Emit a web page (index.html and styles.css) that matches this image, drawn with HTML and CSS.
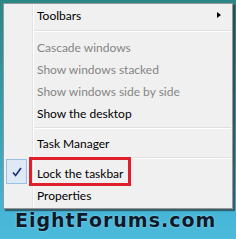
FILE: index.html
```html
<!DOCTYPE html>
<html>
<head>
<meta charset="utf-8">
<link rel="stylesheet" href="styles.css">
</head>
<body>
<div class="menu">
  <div class="item"><span class="label">Toolbars</span><span class="arrow"></span></div>
  <div class="sep first"></div>
  <div class="item disabled"><span class="label">Cascade windows</span></div>
  <div class="item disabled"><span class="label">Show windows stacked</span></div>
  <div class="item disabled"><span class="label">Show windows side by side</span></div>
  <div class="item"><span class="label">Show the desktop</span></div>
  <div class="sep"></div>
  <div class="item"><span class="label">Task Manager</span></div>
  <div class="sep"></div>
  <div class="item checked">
    <span class="check"><svg width="12" height="12" viewBox="0 0 12 12"><path d="M2 6.5 L4.6 9.5 L10 2" fill="none" stroke="#1c2d74" stroke-width="1.6"/></svg></span>
    <span class="label">Lock the taskbar</span>
    <span class="highlight"></span>
  </div>
  <div class="item"><span class="label">Properties</span></div>
</div>
<div class="brand">EightForums.com</div>
</body>
</html>
```
FILE: styles.css
```css
html, body {
  margin: 0;
  padding: 0;
}
body {
  width: 236px;
  height: 239px;
  overflow: hidden;
  background: linear-gradient(to bottom, #2b8686 0%, #35a0b0 50%, #44b4d6 85%, #4bbadb 100%);
  font-family: "Lato", "Open Sans", sans-serif;
  font-size: 12px;
  color: #000;
  padding-top: 3px;
  box-sizing: border-box;
}
.menu {
  position: relative;
  margin-left: 3px;
  width: 228px;
  background: #f0f0f0;
  border: 1px solid #979797;
  box-shadow: 2px 2px 1px rgba(40,40,40,0.6);
  padding: 0 0 2px 0;
  background-image: linear-gradient(to right, transparent 28px, #e2e3e3 28px, #e2e3e3 29px, #ffffff 29px, #ffffff 30px, transparent 30px);
}
.item {
  position: relative;
  height: 22px;
  display: flex;
  align-items: center;
  padding-left: 33px;
}
.item.disabled {
  color: #858585;
}
.arrow {
  position: absolute;
  right: 11px;
  top: 8px;
  width: 0;
  height: 0;
  border-top: 3.5px solid transparent;
  border-bottom: 3.5px solid transparent;
  border-left: 4px solid #000;
}
.sep {
  height: 0;
  margin: 3px 1px 3px 30px;
  border-top: 1px solid #e0e0e0;
  border-bottom: 1px solid #ffffff;
}
.sep.first {
  margin: 4px 1px 4px 30px;
}
.check {
  position: absolute;
  left: 2px;
  top: -3px;
  width: 19px;
  height: 23px;
  border: 1px solid #98c0e6;
  background: #dfe9f5;
  display: flex;
  align-items: center;
  justify-content: center;
}
.highlight {
  position: absolute;
  left: 25px;
  top: -5px;
  width: 96px;
  height: 23px;
  border: 3px solid #e01f2d;
}
.brand {
  margin-top: 0;
  margin-left: 15px;
  font-family: "DejaVu Sans", sans-serif;
  font-weight: bold;
  font-size: 19px;
  letter-spacing: 1px;
  color: #0b1a2c;
  text-shadow: 0 0 2px rgba(255,255,255,0.6);
}
```
